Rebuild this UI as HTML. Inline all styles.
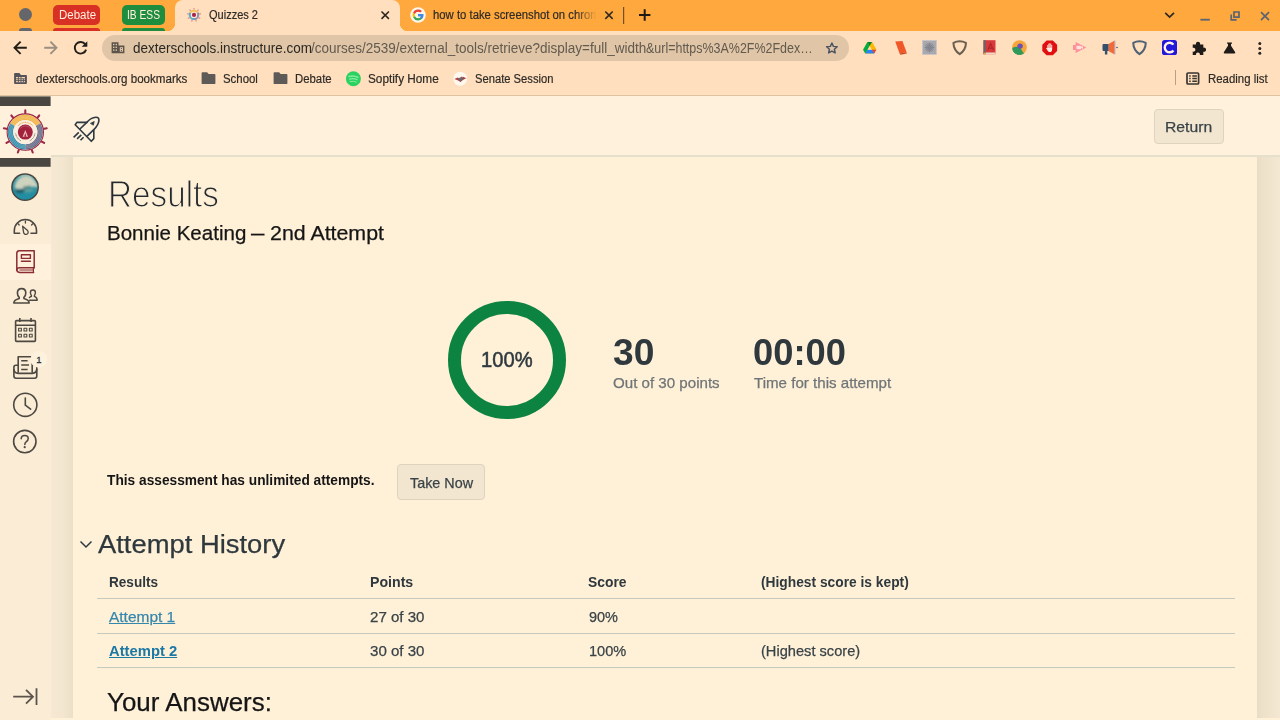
<!DOCTYPE html>
<html><head><meta charset="utf-8">
<style>
*{margin:0;padding:0;box-sizing:border-box}
html,body{width:1280px;height:720px;overflow:hidden;background:#FFF0D8;font-family:"Liberation Sans",sans-serif;}
.abs{position:absolute}
.t{position:absolute;white-space:nowrap;line-height:1;transform-origin:0 0}
#tabbar{left:0;top:0;width:1280px;height:31px;background:#FFA83E}
#toolbar{left:0;top:31px;width:1280px;height:65px;background:#FFDFBD}
#tbline{left:0;top:95px;width:1280px;height:1px;background:#DCC3A2}
#acttab{left:175px;top:0;width:225px;height:31px;background:#FFDFBD;border-radius:8px 8px 0 0}
.curveL{left:167px;top:23px;width:8px;height:8px;background:radial-gradient(circle at 0 0,#FFA83E 8px,#FFDFBD 8.5px)}
.curveR{left:400px;top:23px;width:8px;height:8px;background:radial-gradient(circle at 100% 0,#FFA83E 8px,#FFDFBD 8.5px)}
.chip{height:20px;top:5px;border-radius:5px;color:#fff;font-size:12px;text-align:center;line-height:20px}
#omni{left:102px;top:35px;width:747px;height:26px;border-radius:13px;background:#E0C6A6}
.chrome{font-size:12px;color:#2E2A26;-webkit-text-stroke:0.2px currentColor}
.bm{font-size:12px;color:#2E2A26;top:72px;-webkit-text-stroke:0.2px currentColor}
</style></head><body>
<!-- CHROME -->
<div class="abs" id="tabbar"></div>
<div class="abs" id="toolbar"></div>
<div class="abs" id="tbline"></div>
<div class="abs" id="acttab"></div>
<div class="abs curveL"></div><div class="abs curveR"></div>
<div class="abs" style="left:19px;top:8px;width:13px;height:13.4px;border-radius:7px;background:#64666C"></div>
<div class="abs" style="left:19px;top:28px;width:13px;height:3px;border-radius:3px 3px 0 0;background:#64666C"></div>
<div class="abs chip" style="left:53px;width:47px;background:#D93025"></div><div class="t" id="c_deb" style="left:59.24px;top:8.74px;font-size:12px;color:#FFEFE0;transform:scaleX(0.9568)">Debate</div>
<div class="abs" style="left:53px;top:28px;width:47px;height:3px;border-radius:3px 3px 0 0;background:#D93025"></div>
<div class="abs chip" style="left:122px;width:43px;background:#1E8E3E"></div><div class="t" id="c_ib" style="left:126.95px;top:8.74px;font-size:12px;color:#FFEFE0;transform:scaleX(0.8541)">IB ESS</div>
<div class="abs" style="left:122px;top:28px;width:43px;height:3px;border-radius:3px 3px 0 0;background:#1E8E3E"></div>
<div class="t chrome" id="c_q" style="left:209.13px;top:9.09px;font-size:12px;transform:scaleX(0.9183)">Quizzes 2</div>
<div class="abs" style="left:430px;top:5px;width:167px;height:20px;overflow:hidden"><div class="t chrome" id="c_how" style="left:2.6px;top:4.09px;font-size:12px;transform:scaleX(0.943)">how to take screenshot on chrome</div><div class="abs" style="right:0;top:0;width:22px;height:20px;background:linear-gradient(to right,rgba(255,168,62,0),#FFA83E)"></div></div>
<div class="abs" id="omni"></div>
<div class="t" id="c_url1" style="left:132.64px;top:40.7px;font-size:14px;color:#2A2622;transform:scaleX(0.9628)">dexterschools.instructure.com</div><div class="t" id="c_url2" style="left:311.02px;top:40.7px;font-size:14px;color:#62594F;transform:scaleX(0.9647)">/courses/2539/external_tools/retrieve?display=full_width</div><div class="t" id="c_url3" style="left:645.85px;top:40.7px;font-size:14px;color:#62594F;transform:scaleX(0.8903)">&amp;url=https%3A%2F%2Fdex…</div>
<div class="t bm" id="b_1" style="left:35.73px;top:72.80px;font-size:12px;transform:scaleX(0.9658)">dexterschools.org bookmarks</div>
<div class="t bm" id="b_2" style="left:222.80px;top:72.80px;font-size:12px;transform:scaleX(0.9500)">School</div>
<div class="t bm" id="b_3" style="left:294.80px;top:72.80px;font-size:12px;transform:scaleX(0.9459)">Debate</div>
<div class="t bm" id="b_4" style="left:367.77px;top:72.80px;font-size:12px;transform:scaleX(0.9821)">Soptify Home</div>
<div class="t bm" id="b_5" style="left:474.87px;top:72.80px;font-size:12px;transform:scaleX(0.9329)">Senate Session</div>
<div class="t bm" id="b_6" style="left:1207.55px;top:72.80px;font-size:12px;transform:scaleX(0.9508)">Reading list</div>


<!-- CHROME ICONS -->
<svg class="abs" style="left:0;top:0" width="1280" height="96" viewBox="0 0 1280 96">
<!-- favicon quizzes -->
<g transform="translate(194,14.9)">
 <path d="M0.00 -4.80L0.00 -6.50M3.09 -3.68L4.18 -4.98M4.73 -0.83L6.40 -1.13M4.16 2.40L5.63 3.25M1.64 4.51L2.22 6.11M-1.64 4.51L-2.22 6.11M-4.16 2.40L-5.63 3.25M-4.73 -0.83L-6.40 -1.13M-3.09 -3.68L-4.18 -4.98" stroke="#E3988C" stroke-width="1.4" stroke-linecap="round" fill="none"/>
 <circle r="5.3" fill="#F4DCC4"/>
 <path d="M-4.50 -2.60 A5.2 5.2 0 0 1 4.50 -2.60 L2.77 -1.60 A3.2 3.2 0 0 0 -2.77 -1.60Z" fill="#F3BE58"/>
 <path d="M4.50 -2.60 A5.2 5.2 0 0 1 0.00 5.20 L0.00 3.20 A3.2 3.2 0 0 0 2.77 -1.60Z" fill="#8C8FB0"/>
 <path d="M0.00 5.20 A5.2 5.2 0 0 1 -4.50 -2.60 L-2.77 -1.60 A3.2 3.2 0 0 0 0.00 3.20Z" fill="#5CA8D0"/>
 <circle r="3.2" fill="#FCE9D6"/>
 <circle r="2.1" fill="#A8284A"/>
</g>
<!-- tab close -->
<g stroke="#2E2922" stroke-width="1.6" fill="none"><path d="M381.5 11.5l7.4 7.4M388.9 11.5l-7.4 7.4M605.3 11.5l7.4 7.4M612.7 11.5l-7.4 7.4"/></g>
<!-- google G -->
<g transform="translate(418,15)"><circle r="7.8" fill="#FFF6EA"/>
 <path d="M5.3-0.9H0.1V1.3H3.1A3.3 3.3 0 0 1 0.1 3.3A3.4 3.4 0 0 1-3.1 1.1L-4.9 2.5A5.5 5.5 0 0 0 0.1 5.4C3.3 5.4 5.9 3.1 5.3-0.9Z" fill="#34A853"/>
 <path d="M5.3-0.9H0.1V1.3H3.1A3.3 3.3 0 0 1 1.9 2.8L3.6 4.1A5.4 5.4 0 0 0 5.3-0.9Z" fill="#4285F4"/>
 <path d="M-3.1 1.1A3.4 3.4 0 0 1-3.1-1.1L-4.9-2.5A5.5 5.5 0 0 0-4.9 2.5Z" fill="#FBBC05"/>
 <path d="M-3.1-1.1A3.4 3.4 0 0 1 0.1-3.3A3.2 3.2 0 0 1 2.3-2.5L3.9-4A5.4 5.4 0 0 0 0.1-5.4A5.5 5.5 0 0 0-4.9-2.5Z" fill="#EA4335"/>
</g>
<rect x="623" y="7" width="1.2" height="17" fill="#6E5128"/>
<path d="M639 15h11.4M644.7 9.3v11.4" stroke="#1E1A16" stroke-width="2" fill="none"/>
<!-- window controls -->
<path d="M1165.2 12.8l4.4 4.3 4.4-4.3" stroke="#2E2922" stroke-width="1.7" fill="none"/>
<rect x="1200.4" y="18.8" width="9.4" height="1.8" fill="#5B6470"/>
<path d="M1234 12h5v5.2h-5z M1231.2 14.5v5.3h5.4" stroke="#5B6470" stroke-width="1.7" fill="none"/>
<path d="M1261 12.2l8 8M1269 12.2l-8 8" stroke="#5B6470" stroke-width="1.7" fill="none"/>
<!-- nav -->
<path d="M26.8 47.8H15M20.6 41.7l-6.1 6.1 6.1 6.1" stroke="#221E1A" stroke-width="1.9" fill="none"/>
<path d="M44.2 47.8H56M50.4 41.7l6.1 6.1-6.1 6.1" stroke="#9A8F82" stroke-width="1.9" fill="none"/>
<path d="M85.3 44.4A5.8 5.8 0 1 0 86.1 49.6" stroke="#221E1A" stroke-width="1.9" fill="none"/>
<path d="M87.3 41.2v5.6h-5.6z" fill="#221E1A"/>
<!-- site icon -->
<g><path d="M111.6 42.2h6.9v3.4h5.9v7.6h-12.8z" fill="#5C544A"/><g fill="#E0C6A6"><rect x="113" y="43.8" width="1.4" height="1.4"/><rect x="115.6" y="43.8" width="1.4" height="1.4"/><rect x="113" y="46.6" width="1.4" height="1.4"/><rect x="115.6" y="46.6" width="1.4" height="1.4"/><rect x="113" y="49.4" width="1.4" height="1.4"/><rect x="115.6" y="49.4" width="1.4" height="1.4"/><rect x="119.8" y="47.2" width="3.2" height="4.4"/></g><rect x="120.9" y="48" width="1" height="1" fill="#5C544A"/><rect x="120.9" y="50" width="1" height="1" fill="#5C544A"/></g>
<!-- star -->
<path transform="translate(831.9,48.3) scale(0.8) translate(-831.5,-47.9)" d="M831.5 41.2l1.9 4.3 4.7.5-3.5 3.1 1 4.6-4.1-2.4-4.1 2.4 1-4.6-3.5-3.1 4.7-.5z" stroke="#4B5262" stroke-width="1.8" fill="none" stroke-linejoin="round"/>
<!-- drive -->
<g transform="translate(869.7,47.8) scale(0.88)"><path d="M-2.6-6.5h5.2L7.5 2.2 4.9 6.5h-9.8L-7.5 2.2z" fill="#FFBA00"/><path d="M-2.6-6.5L0-2.1-4.9 6.5-7.5 2.2z" fill="#00AC47"/><path d="M-2.6 2.2h10.1L4.9 6.5h-9.8z" fill="#2684FC"/><path d="M2.6-6.5L7.5 2.2H2.4L0-2.1z" fill="#FFBA00"/><path d="M2.4 2.2h5.1L4.9 6.5z" fill="#EA4335"/><path d="M-2.6-6.5h5.2L0-2.1z" fill="#00832D"/><path d="M0-2.1L2.4 2.2h-4.8z" fill="#FFDFBD"/></g>
<!-- orange book -->
<g transform="translate(900.3,47.8) scale(0.92)"><path d="M-5.5-6.8L2.3-7.5 6.8 4.8-0.8 6.2z" fill="#F0582A"/><path d="M-0.8 6.2L6.8 4.8 7 6.2 0.2 7.5z" fill="#C9421C"/></g>
<!-- grey square -->
<g transform="translate(929.5,47.5)"><rect x="-7" y="-7" width="14" height="14" fill="#A8A8AE" stroke="#C8C6C8" stroke-width="0.8"/><g stroke="#85858E" stroke-width="1"><path d="M0-4.8V4.8M-4.8 0H4.8M-3.4-3.4L3.4 3.4M-3.4 3.4L3.4-3.4M-1.8-4.4L1.8 4.4M-4.4-1.8L4.4 1.8M1.8-4.4L-1.8 4.4M-4.4 1.8L4.4-1.8"/></g></g>
<!-- shield1 -->
<path transform="translate(959.7,47.7)" d="M-6.3-4.8Q0-8 6.3-4.8Q6 2.5 0 6.5Q-6 2.5-6.3-4.8Z" stroke="#6B6152" stroke-width="2" fill="none" stroke-linejoin="round"/>
<!-- red book A -->
<g transform="translate(989.5,47.5)"><rect x="-6" y="-7.3" width="12" height="14" fill="#D83A3C"/><rect x="-6" y="-7.3" width="2.2" height="14" fill="#6A6468"/><rect x="-4" y="5" width="10" height="1.7" fill="#EED9C8"/><path d="M-1.8 2.8L1.1-4 4 2.8M-0.6 0.6h3.4" stroke="#B02226" stroke-width="1.1" fill="none"/><path d="M-6 6.7l1.2-2 1.2 2z" fill="#F0B040"/></g>
<!-- chrome-like -->
<g transform="translate(1019.5,47.5)"><circle r="7.3" fill="#F7A63B"/><path d="M-7.3 0.5A7.3 7.3 0 0 0 4 6.1L1 0.5Q-3-2-7.3 0.5Z" fill="#2F9A5C"/><path d="M-7 2.2Q-1 0 4.5 5.8A7.3 7.3 0 0 1-7 2.2Z" fill="#2F9A5C"/><circle cx="0.6" cy="-1.4" r="2.7" fill="#6A4FB8"/></g>
<!-- adblock -->
<g transform="translate(1049.7,47.8)"><path d="M-3.1-7.4h6.2L7.4-3.1v6.2L3.1 7.4h-6.2L-7.4 3.1v-6.2z" fill="#E01010"/><path d="M-2.4 0.6V-2.8h1V-4h1v-0.5h1V-4h1V-2.8h0.9v3.4Q2.5 4.2 0.2 4.2Q-1.4 4.2-2.2 2.6L-3.6 0.4Q-3-0.4-2.4 0.6Z" fill="#FFF1E2"/><path d="M-1.4-3V0M-0.4-4V0M0.6-4V0M1.6-3V0" stroke="#E01010" stroke-width="0.35"/></g>
<!-- pink cam -->
<g transform="translate(1079.5,47.5)"><path d="M-6.5-2.6h2.6V-5.5L6.8 0-3.9 5.5V2.6h-2.6z" fill="#FF8F99"/><rect x="-3" y="-1.8" width="4.6" height="3.6" rx="0.6" fill="#FFE3DC"/><path d="M1.6-0.4L3.4-1.6V1.6L1.6 0.4z" fill="#FFE3DC"/></g>
<!-- megaphone -->
<g transform="translate(1109.5,47.5)"><path d="M-1-3.4L5.2-7V7L-1 3.4z" fill="#F26A3A"/><path d="M-7-2.6Q-7-3.4-6-3.4H-1V3.4H-2.2V7H-4.6V3.4H-6Q-7 3.4-7 2.6z" fill="#34506B"/><rect x="5.4" y="-7" width="1" height="14" fill="#BFD0E4"/><rect x="6.8" y="-0.6" width="1.4" height="1.2" fill="#34506B"/></g>
<!-- shield2 -->
<path transform="translate(1139.5,47.7)" d="M-6.3-4.8Q0-8 6.3-4.8Q6 2.5 0 6.5Q-6 2.5-6.3-4.8Z" stroke="#4F6375" stroke-width="2" fill="none" stroke-linejoin="round"/>
<!-- C -->
<g transform="translate(1169.5,47.5)"><rect x="-7.5" y="-7.5" width="15" height="15" rx="2.6" fill="#2218DC"/><path d="M3.9-2.9A4.8 4.8 0 1 0 3.9 2.9" stroke="#FFF2E0" stroke-width="2.4" fill="none"/></g>
<!-- puzzle -->
<path transform="translate(1199.3,48.3) scale(1.06)" d="M-6.2-3.6h3.1a2 2 0 1 1 3.8 0h3.1v3a2 2 0 1 1 0 3.8v3.2h-3.3a1.9 1.9 0 1 0-3.6 0h-3.1v-3.3a1.9 1.9 0 1 0 0-3.6z" fill="#1F1B18"/>
<!-- flask -->
<path transform="translate(1229.5,48) scale(0.95,0.84)" d="M-2.6-6.6h5.2v1.4h-1v2.6L6 5.2Q6.4 6.6 5 6.6H-5Q-6.4 6.6-6 5.2L-1.6-2.6V-5.2h-1z" fill="#1F1B18"/>
<!-- menu dots -->
<g fill="#2A2622"><circle cx="1259.8" cy="43.6" r="1.5"/><circle cx="1259.8" cy="48.4" r="1.5"/><circle cx="1259.8" cy="53.2" r="1.5"/></g>
<!-- bookmark icons -->
<path d="M15 73.1h4.4l1.5 1.8h5.1q0.9 0 0.9 0.9v7.3q0 0.9-0.9 0.9h-11q-0.9 0-0.9-0.9v-9.1q0-0.9 0.9-0.9z" fill="#55525A"/><g fill="#F3D6B4"><rect x="16" y="77" width="9" height="5.2"/></g><g stroke="#55525A" stroke-width="0.9"><path d="M16 78.8h9M16 80.6h9M18.4 77v5.2M21 77v5.2M23.4 78.8v3.4"/></g>
<path d="M202.5 72.2h4.6l1.5 1.8h5.9q0.9 0 0.9 0.9v8.3q0 0.9-0.9 0.9h-12q-0.9 0-0.9-0.9v-10.1q0-0.9 0.9-0.9z" fill="#5E5A58"/>
<path d="M274.5 72.2h4.6l1.5 1.8h5.9q0.9 0 0.9 0.9v8.3q0 0.9-0.9 0.9h-12q-0.9 0-0.9-0.9v-10.1q0-0.9 0.9-0.9z" fill="#5E5A58"/>
<g transform="translate(353.4,78.7)"><circle r="7.5" fill="#2AD260"/><g fill="none" stroke="#8BEAA6" stroke-linecap="round"><path d="M-4.3-2.2Q0.2-3.7 4.5-1.3" stroke-width="1.5"/><path d="M-3.8 0.4Q0.2-0.8 3.8 1.1" stroke-width="1.2"/><path d="M-3.3 2.8Q0 1.9 3 3.4" stroke-width="1"/></g></g>
<g transform="translate(460.2,78.8)"><circle r="7" fill="#FFF8EE"/><path d="M-5.8 0.2L-2.4-1.4 0.2 0.4 3-2 6-0.6 2.6 1.2 0.4 3.2-2.6 1.4z" fill="#C8363C"/><path d="M-2.8 0.2L1.8-2.4 3.4 0.4 0.2 2.8z" fill="#6A6A6C"/></g>
<rect x="1175" y="70" width="1" height="15" fill="#B8A084"/>
<g fill="none" stroke="#3A3530" stroke-width="1.7"><rect x="1187" y="73" width="11.6" height="11" rx="1"/><path d="M1192.3 75.9h4.6M1192.3 78.5h4.6M1192.3 81.2h4.6" stroke-width="1.5"/><path d="M1189.2 75.9h1.5M1189.2 78.5h1.5M1189.2 81.2h1.5" stroke-width="1.5"/></g>
</svg>

<!-- PAGE -->
<style>
#side{left:0;top:96px;width:51px;height:624px;background:#FAECD5}
#gutL{left:51px;top:157px;width:22px;height:561px;background:linear-gradient(to right,#F5E9D3 0%,#F2E6CF 60%,#EBDFC7 100%)}
#gutR{left:1257px;top:157px;width:23px;height:561px;background:linear-gradient(to right,#E9DDC5 0%,#EEE2CB 35%,#F4E8D2 100%)}
#hdr{left:51px;top:96px;width:1229px;height:61px;background:#FFF1DB;border-bottom:2px solid #E6DFCC}
.btn{background:#F3E6D0;border:1px solid #DDD3BF;border-radius:4px}
.pt{position:absolute;white-space:nowrap;line-height:1;transform-origin:0 0;color:#2F393D;-webkit-text-stroke:0.25px currentColor}
.hl{position:absolute;left:97px;width:1138px;height:1px;background:#C6CABD}
</style>
<div class="abs" id="side"></div>
<div class="abs" id="gutL"></div>
<div class="abs" id="gutR"></div>
<div class="abs" id="hdr"></div>
<svg class="abs" style="left:0;top:90px" width="60" height="90"><rect x="0" y="6.4" width="50.6" height="10.4" fill="#4A4742"/><rect x="0" y="67.6" width="50.6" height="9.2" fill="#4A4742"/></svg>
<div class="abs" style="left:0;top:106px;width:51px;height:52px;background:#FFF1DB"></div>

<div class="abs" style="left:0;top:244px;width:51px;height:36px;background:#FFF1DB"></div>
<div class="abs btn" style="left:1153.5px;top:109px;width:70.5px;height:35px"></div>
<div class="pt" id="p_return" style="color:#394347;left:1165.2px;top:119.1px;font-size:15px;transform:scaleX(1.0465)">Return</div>
<div class="pt" id="p_results" style="-webkit-text-stroke:1.1px #FFF0D8;left:107.96px;top:176.78px;font-size:36px;color:#23292D;transform:scaleX(0.9243)">Results</div>
<div class="pt" id="p_bon0" style="left:106.82px;top:222.65px;font-size:20.5px;color:#151515;transform:scaleX(1.0018)">Bonnie Keating</div><div class="pt" id="p_bon1" style="left:250.81px;top:222.65px;font-size:20.5px;color:#151515;transform:scaleX(0.6548)">—</div><div class="pt" id="p_bon2" style="left:270.28px;top:222.65px;font-size:20.5px;color:#151515;transform:scaleX(1.0417)">2nd Attempt</div>
<svg class="abs" style="left:447px;top:300px" width="120" height="120"><circle cx="60" cy="60" r="52.5" fill="none" stroke="#0D8341" stroke-width="13"/></svg>
<div class="pt" id="p_pct" style="left:480.89px;top:348.78px;font-size:22px;font-weight:normal;-webkit-text-stroke:0.55px #2D3A42;transform:scaleX(0.9164)">100%</div>
<div class="pt" id="p_30" style="left:613.47px;top:335.03px;font-size:36px;font-weight:bold;-webkit-text-stroke:0;transform:scaleX(1.0329)">30</div>
<div class="pt" id="p_out" style="left:612.74px;top:375.05px;font-size:15px;color:#6F7577;transform:scaleX(1.0071)">Out of 30 points</div>
<div class="pt" id="p_time" style="left:752.74px;top:335.03px;font-size:36px;font-weight:bold;-webkit-text-stroke:0;transform:scaleX(1.0083)">00:00</div>
<div class="pt" id="p_tfa" style="left:753.75px;top:375.05px;font-size:15px;color:#6F7577;transform:scaleX(1.0074)">Time for this attempt</div>
<div class="pt" id="p_assess" style="left:106.70px;top:472.40px;font-size:15px;font-weight:bold;-webkit-text-stroke:0;color:#151515;transform:scaleX(0.9144)">This assessment has unlimited attempts.</div>
<div class="abs btn" style="left:397px;top:464px;width:88px;height:36px"></div>
<div class="pt" id="p_take" style="color:#394347;left:409.75px;top:474.55px;font-size:15px;transform:scaleX(0.9583)">Take Now</div>
<svg class="abs" style="left:79px;top:539px" width="14" height="11"><path d="M1.5 2.5 L7 8 L12.5 2.5" fill="none" stroke="#2D3A42" stroke-width="1.5"/></svg>
<div class="pt" id="p_hist" style="left:98.0px;top:531.32px;font-size:26.5px;transform:scaleX(1.0331)">Attempt History</div>
<div class="pt" id="p_h1" style="left:108.59px;top:574.3px;font-size:15px;font-weight:bold;-webkit-text-stroke:0;transform:scaleX(0.9057)">Results</div>
<div class="pt" id="p_h2" style="left:369.56px;top:574.3px;font-size:15px;font-weight:bold;-webkit-text-stroke:0;transform:scaleX(0.9432)">Points</div>
<div class="pt" id="p_h3" style="left:588.33px;top:574.3px;font-size:15px;font-weight:bold;-webkit-text-stroke:0;transform:scaleX(0.925)">Score</div>
<div class="pt" id="p_h4" style="left:761.08px;top:574.3px;font-size:15px;font-weight:bold;-webkit-text-stroke:0;transform:scaleX(0.9182)">(Highest score is kept)</div>
<div class="hl" style="top:598px"></div>
<div class="pt" id="p_a1" style="left:109.0px;top:609.3px;font-size:15px;color:#3687AD;text-decoration:underline;transform:scaleX(1.0312)">Attempt 1</div>
<div class="pt" id="p_a1p" style="color:#394347;left:369.5px;top:609.3px;font-size:15px;transform:scaleX(1.0047)">27 of 30</div>
<div class="pt" id="p_a1s" style="color:#394347;left:588.53px;top:609.3px;font-size:15px;transform:scaleX(0.9655)">90%</div>
<div class="hl" style="top:633px"></div>
<div class="pt" id="p_a2" style="left:109.0px;top:643.3px;font-size:15px;font-weight:bold;-webkit-text-stroke:0;color:#1B78A4;text-decoration:underline;transform:scaleX(0.9855)">Attempt 2</div>
<div class="pt" id="p_a2p" style="color:#394347;left:369.5px;top:643.3px;font-size:15px;transform:scaleX(1.0047)">30 of 30</div>
<div class="pt" id="p_a2s" style="color:#394347;left:589.03px;top:643.3px;font-size:15px;transform:scaleX(0.973)">100%</div>
<div class="pt" id="p_a2h" style="color:#394347;left:761.02px;top:643.3px;font-size:15px;transform:scaleX(0.975)">(Highest score)</div>
<div class="hl" style="top:667px"></div>
<div class="pt" id="p_ans" style="left:106.51px;top:688.57px;font-size:26.5px;color:#151515;transform:scaleX(0.9790)">Your Answers:</div>

<!-- SIDEBAR ICONS -->
<svg class="abs" style="left:0;top:96px" width="110" height="624" viewBox="0 96 110 624">
<!-- logo -->
<g transform="translate(25.3,132.1)">
 <path d="M0.00 -18.00L0.00 -21.70M11.57 -13.79L13.95 -16.62M17.73 -3.13L21.37 -3.77M15.59 9.00L18.79 10.85M6.16 16.91L7.42 20.39M-6.16 16.91L-7.42 20.39M-15.59 9.00L-18.79 10.85M-17.73 -3.13L-21.37 -3.77M-11.57 -13.79L-13.95 -16.62" stroke="#9E2847" stroke-width="2.1" stroke-linecap="round" fill="none"/>
 <circle r="18.2" fill="#F6E4D2" stroke="#9E2847" stroke-width="1.1"/>
 <path d="M-15.07 -8.70 A17.4 17.4 0 0 1 15.07 -8.70 L10.48 -6.05 A12.1 12.1 0 0 0 -10.48 -6.05Z" fill="#F2B548"/>
 <path d="M15.07 -8.70 A17.4 17.4 0 0 1 0.00 17.40 L0.00 12.10 A12.1 12.1 0 0 0 10.48 -6.05Z" fill="#636A8B"/>
 <path d="M0.00 17.40 A17.4 17.4 0 0 1 -15.07 -8.70 L-10.48 -6.05 A12.1 12.1 0 0 0 0.00 12.10Z" fill="#2F8FB2"/>
 <g stroke="#F6E4D2" stroke-width="0.45" fill="none" opacity="0.55"><circle r="13.6"/><circle r="14.9"/><circle r="16.2"/></g>
 <circle r="12.1" fill="#FBEEDF"/>
 <circle r="7.5" fill="#A3213D"/>
 <path d="M0-2.2L2.7 4.6H-2.7Z" fill="#E7BDB9"/><path d="M0 0.8L1.1 4.6H-1.1Z" fill="#A3213D"/>
 <path d="M-5-3.6A6.2 6.2 0 0 1 5-3.6" stroke="#C96A78" stroke-width="0.6" fill="none"/>
 <path d="M-7.4-6.3A9.7 9.7 0 0 1 7.4-6.3" stroke="#EFB458" stroke-width="1.1" fill="none" stroke-dasharray="1.1 0.5"/>
 <path d="M-9.6 1.4A9.7 9.7 0 0 0-4.2 8.8M9.6 1.4A9.7 9.7 0 0 1 4.2 8.8" stroke="#7D776C" stroke-width="1" fill="none" stroke-dasharray="1.1 0.5"/>
</g>
<!-- rocket -->
<g fill="none" stroke="#2D3A42" stroke-width="1.6" stroke-linejoin="round" stroke-linecap="round">
 <path d="M76.8 122.4H86.8Q91 117.6 95.8 117.3Q99.2 117.1 98.9 120.6Q98.4 125 93.8 129.7V138.6L91.3 141.3L75.2 124.7Z"/>
 <path d="M86.8 122.4L80.2 128.8M93.8 129.7L87.4 135.8"/>
 <path d="M73.6 137.4L78.8 132.4M77.1 138.9L81.3 134.9M80.5 140.2L83.6 137.2" stroke-linecap="butt"/>
 <path d="M90.8 123.2L94.2 121.6L93.4 124.8Z" fill="#2D3A42" stroke-width="0.9"/>
</g>
<!-- avatar -->
<defs><clipPath id="av"><circle cx="25.05" cy="187.2" r="12.4"/></clipPath>
<linearGradient id="avg" x1="0" y1="0" x2="0" y2="1"><stop offset="0" stop-color="#6FB0B4"/><stop offset="0.5" stop-color="#2E8FA0"/><stop offset="1" stop-color="#1A8CA3"/></linearGradient>
<filter id="bl"><feGaussianBlur stdDeviation="0.9"/></filter></defs>
<circle cx="25.05" cy="187.2" r="13.9" fill="#4A4540"/>
<g clip-path="url(#av)"><rect x="10" y="172" width="30" height="30" fill="url(#avg)"/>
<g filter="url(#bl)">
<path d="M14.5 188Q15 180 23 176.5Q30 174.5 35 181Q37 184 38.5 187.5Q33 186 28 188Q20 190 14.5 188Z" fill="#CDD3BF"/>
<path d="M20 176Q26 172 31 176" stroke="#9FC0B4" stroke-width="2" fill="none"/>
<path d="M23 186.5L31 185.5L30 188L24 188.5Z" fill="#56857F"/>
<path d="M15 190Q21 188 27 189Q24 194 17 193Z" fill="#23606B"/>
<path d="M24 190Q30 188 35 190Q30 193 25 192.5Z" fill="#5FA09C"/>
</g></g>
<!-- dashboard -->
<g fill="none" stroke="#4D4842" stroke-width="1.6" stroke-linecap="round" stroke-linejoin="round">
 <path d="M19.6 233.2H14.3V230.6A11.1 11.1 0 0 1 36.5 230.6V233.2H31"/>
 <path d="M25.4 221V223M18 223.6L19.2 225M32.8 223.6L31.6 225" stroke-width="1.3"/>
 <path d="M22.6 226.2L27.6 230.6A2.3 2.3 0 1 1 23.6 232.4Z" stroke-width="1.3"/>
</g>
<!-- book -->
<g fill="none" stroke="#8B2D33" stroke-width="1.5" stroke-linejoin="round" stroke-linecap="round">
 <path d="M34.2 267.8V250.8H19.4Q16.8 250.8 16.8 253.4V269.6Q16.8 272.4 19.6 272.4H33.6"/>
 <path d="M34.2 267.8H19.6Q16.8 267.8 16.8 270"/>
 <path d="M33.4 267.8V272.4" stroke-width="1.2"/><path d="M19.8 270H33" stroke-width="1"/>
 <path d="M21.4 254.8h9v3.6h-9zM21.4 261.3h9" stroke-width="1.4"/>
</g>
<!-- groups -->
<g fill="none" stroke="#4D4842" stroke-width="1.6" stroke-linejoin="round" stroke-linecap="round">
 <path d="M21.6 288.6Q25.8 288.6 25.8 293Q25.8 295.8 23.9 297.4V298.6Q29 300 29.2 303H13.8Q14 300 19.2 298.6V297.4Q17.4 295.8 17.4 293Q17.4 288.6 21.6 288.6Z"/>
 <path d="M29.6 300.2H37.2Q37.2 297.4 34.4 296.4V295.4Q35.4 294.4 35.4 292.6Q35.4 290 32.9 290Q30.4 290 30.4 292.6Q30.4 294.4 31.4 295.4V296.4Q30 296.8 29.4 297.6" stroke-width="1.4"/>
</g>
<!-- calendar -->
<g fill="none" stroke="#4D4842" stroke-width="1.6" stroke-linejoin="round">
 <rect x="15.6" y="320.6" width="19.8" height="20.8" rx="1"/>
 <path d="M15.6 325.2H35.4M19.8 318V322M31 318V322"/>
 <g stroke-width="1.1"><rect x="18.6" y="328.2" width="2.8" height="2.8"/><rect x="24" y="328.2" width="2.8" height="2.8"/><rect x="29.4" y="328.2" width="2.8" height="2.8"/><rect x="18.6" y="334.2" width="2.8" height="2.8"/><rect x="24" y="334.2" width="2.8" height="2.8"/><rect x="29.4" y="334.2" width="2.8" height="2.8"/></g>
</g>
<!-- inbox -->
<g fill="none" stroke="#4D4842" stroke-width="1.6" stroke-linejoin="round" stroke-linecap="butt">
 <path d="M18.2 372.8V356.8H32.2V372.8"/>
 <path d="M21.2 360.8H27.6M21.2 365.1H29M21.2 369.4H27.6" stroke-width="1.5"/>
 <path d="M18.2 365.2H15.9Q13.9 365.2 13.9 367.2V376Q13.9 378.2 16.1 378.2H34.6Q36.8 378.2 36.8 376V367.2Q36.8 365.2 34.8 365.2H32.2"/>
 <path d="M13.9 369.2Q14.2 373.3 18.4 373.3H32.3Q36.4 373.3 36.8 369.2" stroke-width="1.7"/>
</g>
<circle cx="38.8" cy="359.4" r="8.4" fill="#FFF2DD"/>
<!-- clock -->
<g fill="none" stroke="#4D4842" stroke-width="1.6" stroke-linecap="round">
 <circle cx="25.3" cy="404.8" r="11.6"/><path d="M25.3 398V405.2L30.6 409.2"/>
</g>
<!-- help -->
<g fill="none" stroke="#4D4842" stroke-width="1.6" stroke-linecap="round">
 <circle cx="24.8" cy="441.6" r="11.2"/>
 <path d="M21.2 438.8Q21.2 435.6 24.8 435.6Q28.2 435.6 28.2 438.6Q28.2 440.4 26.4 441.6Q24.8 442.6 24.8 444.6" stroke-width="1.5"/>
</g>
<circle cx="24.7" cy="447.2" r="1.1" fill="#4D4842"/>
<!-- collapse -->
<g fill="none" stroke="#5A544C" stroke-width="1.8" stroke-linecap="butt">
 <path d="M13.2 696.7H33M26 689.8L33 696.7L26 703.6M36.5 688.2V705"/>
</g>
</svg>
<div class="t" style="left:36.2px;top:355.1px;font-size:9.6px;color:#2D3A42;-webkit-text-stroke:0.3px #2D3A42">1</div><div class="abs" style="left:36.6px;top:361.6px;width:4.2px;height:1.1px;background:#2D3A42"></div>
</body></html>
